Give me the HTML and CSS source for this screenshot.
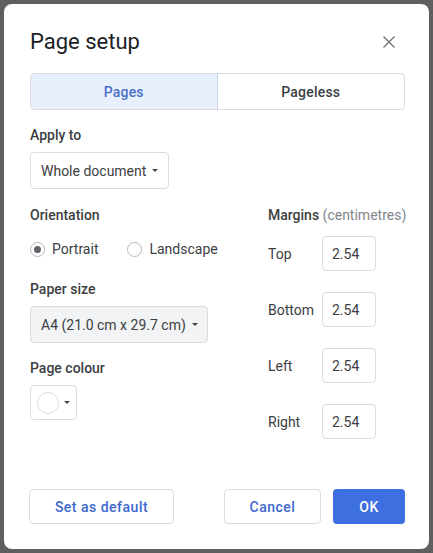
FILE: index.html
```html
<!DOCTYPE html>
<html>
<head>
<meta charset="utf-8">
<link rel="stylesheet" href="styles.css">
</head>
<body>
<div class="dialog">
  <div class="title-row">
    <h1 class="title">Page setup</h1>
    <button class="close" aria-label="Close">
      <svg width="14" height="14" viewBox="0 0 14 14"><path d="M1.5 1.5L12.5 12.5M12.5 1.5L1.5 12.5" stroke="#6f7378" stroke-width="1.4" fill="none"/></svg>
    </button>
  </div>
  <div class="tabs">
    <div class="tab active">Pages</div>
    <div class="tab">Pageless</div>
  </div>

  <div class="label first">Apply to</div>
  <div class="select white">Whole document <span class="caret"></span></div>

  <div class="cols">
    <div class="left">
      <div class="label">Orientation</div>
      <div class="radios">
        <label class="radio"><span class="dot on"></span>Portrait</label>
        <label class="radio"><span class="dot"></span>Landscape</label>
      </div>
      <div class="label">Paper size</div>
      <div class="select grey">A4 (21.0 cm x 29.7 cm) <span class="caret"></span></div>
      <div class="label">Page colour</div>
      <div class="colour"><span class="swatch"></span><span class="caret"></span></div>
    </div>
    <div class="right">
      <div class="label nowrap">Margins <span class="unit">(centimetres)</span></div>
      <div class="margin-row"><span class="mlabel">Top</span><span class="input">2.54</span></div>
      <div class="margin-row"><span class="mlabel">Bottom</span><span class="input">2.54</span></div>
      <div class="margin-row"><span class="mlabel">Left</span><span class="input">2.54</span></div>
      <div class="margin-row"><span class="mlabel">Right</span><span class="input">2.54</span></div>
    </div>
  </div>

  <div class="actions">
    <button class="btn outline">Set as default</button>
    <div class="spacer"></div>
    <button class="btn outline cancel">Cancel</button>
    <button class="btn primary">OK</button>
  </div>
</div>
</body>
</html>
```

FILE: styles.css
```css
* { box-sizing: border-box; }
html, body { margin: 0; padding: 0; }
body {
  background: #5f5f5f;
  width: 433px;
  height: 553px;
  padding: 4px;
  font-family: Roboto, "Liberation Sans", sans-serif;
  color: #3c4043;
  font-size: 14px;
}
.dialog {
  width: 425px;
  height: 545px;
  background: #fff;
  border-radius: 8px;
  padding: 24px 24px 0 26px;
  position: relative;
}
.title-row {
  display: flex;
  align-items: center;
  justify-content: space-between;
  height: 28px;
}
.title {
  margin: 0;
  font-size: 22px;
  font-weight: 400;
  color: #202124;
  line-height: 28px;
}
.close {
  border: 0;
  background: none;
  padding: 0;
  width: 24px;
  height: 24px;
  display: flex;
  align-items: center;
  justify-content: center;
  margin-right: 4px;
}
.tabs {
  margin-top: 17px;
  display: grid;
  grid-template-columns: 1fr 1fr;
  height: 37px;
  border: 1px solid #dadce0;
  border-radius: 4px;
  overflow: hidden;
}
.tab {
  display: flex;
  align-items: center;
  justify-content: center;
  font-size: 14px;
  font-weight: 500;
  color: #3c4043;
  letter-spacing: 0.2px;
}
.tab.active {
  background: #e8f0fe;
  color: #4a6fc6;
  border-right: 1px solid #c9d3ea;
}
.label {
  font-size: 14px;
  font-weight: 500;
  color: #3c4043;
  line-height: 20px;
  margin-top: 15px;
}
.nowrap { white-space: nowrap; }
.select {
  display: inline-flex;
  align-items: center;
  height: 37px;
  padding: 0 10px 0 10px;
  border: 1px solid #dadce0;
  border-radius: 4px;
  margin-top: 7px;
  color: #3c4043;
  font-size: 14px;
}
.select.grey {
  background: #f1f3f4;
  padding-right: 9px;
}
.caret {
  display: inline-block;
  width: 0;
  height: 0;
  border-left: 3.5px solid transparent;
  border-right: 3.5px solid transparent;
  border-top: 3.5px solid #444;
  margin-left: 6px;
}
.cols {
  display: flex;
  margin-top: 1px;
}
.left { flex: 0 0 238px; }
.right { flex: 1 1 0; min-width: 0; }
.radios {
  display: flex;
  gap: 29px;
  margin-top: 9px;
  height: 30px;
  align-items: center;
}
.radio {
  display: flex;
  align-items: center;
  gap: 7px;
  color: #3c4043;
}
.dot {
  width: 15px;
  height: 15px;
  border: 1px solid #b5b9bd;
  border-radius: 50%;
  display: flex;
  align-items: center;
  justify-content: center;
}
.dot.on::after {
  content: "";
  width: 7px;
  height: 7px;
  border-radius: 50%;
  background: #5f6368;
}
.colour {
  display: flex;
  align-items: center;
  width: 47px;
  height: 35px;
  border: 1px solid #dadce0;
  border-radius: 4px;
  margin-top: 7px;
  padding-left: 6px;
}
.colour .swatch {
  width: 22px;
  height: 22px;
  border: 1px solid #dadce0;
  border-radius: 50%;
}
.colour .caret { margin-left: 5px; }
.unit { color: #80868b; font-weight: 400; }
.margin-row {
  display: flex;
  align-items: center;
  height: 35px;
  margin-top: 21px;
}
.right .label + .margin-row { margin-top: 11px; }
.mlabel {
  width: 54px;
  color: #3c4043;
}
.input {
  width: 54px;
  height: 35px;
  border: 1px solid #dadce0;
  border-radius: 4px;
  display: flex;
  align-items: center;
  padding-left: 9px;
  color: #3c4043;
}
.actions {
  position: absolute;
  left: 25px;
  right: 24px;
  bottom: 25px;
  display: flex;
  align-items: center;
}
.spacer { flex: 1; }
.btn {
  height: 35px;
  border-radius: 4px;
  font-family: Roboto, "Liberation Sans", sans-serif;
  font-size: 14px;
  font-weight: 500;
  letter-spacing: 0.5px;
  padding: 0;
}
.btn.outline {
  background: #fff;
  border: 1px solid #dadce0;
  color: #3d68cf;
  width: 145px;
}
.btn.cancel { width: 97px; margin-right: 12px; }
.btn.primary {
  background: #3d6fe0;
  border: 0;
  color: #fff;
  width: 72px;
}
```
